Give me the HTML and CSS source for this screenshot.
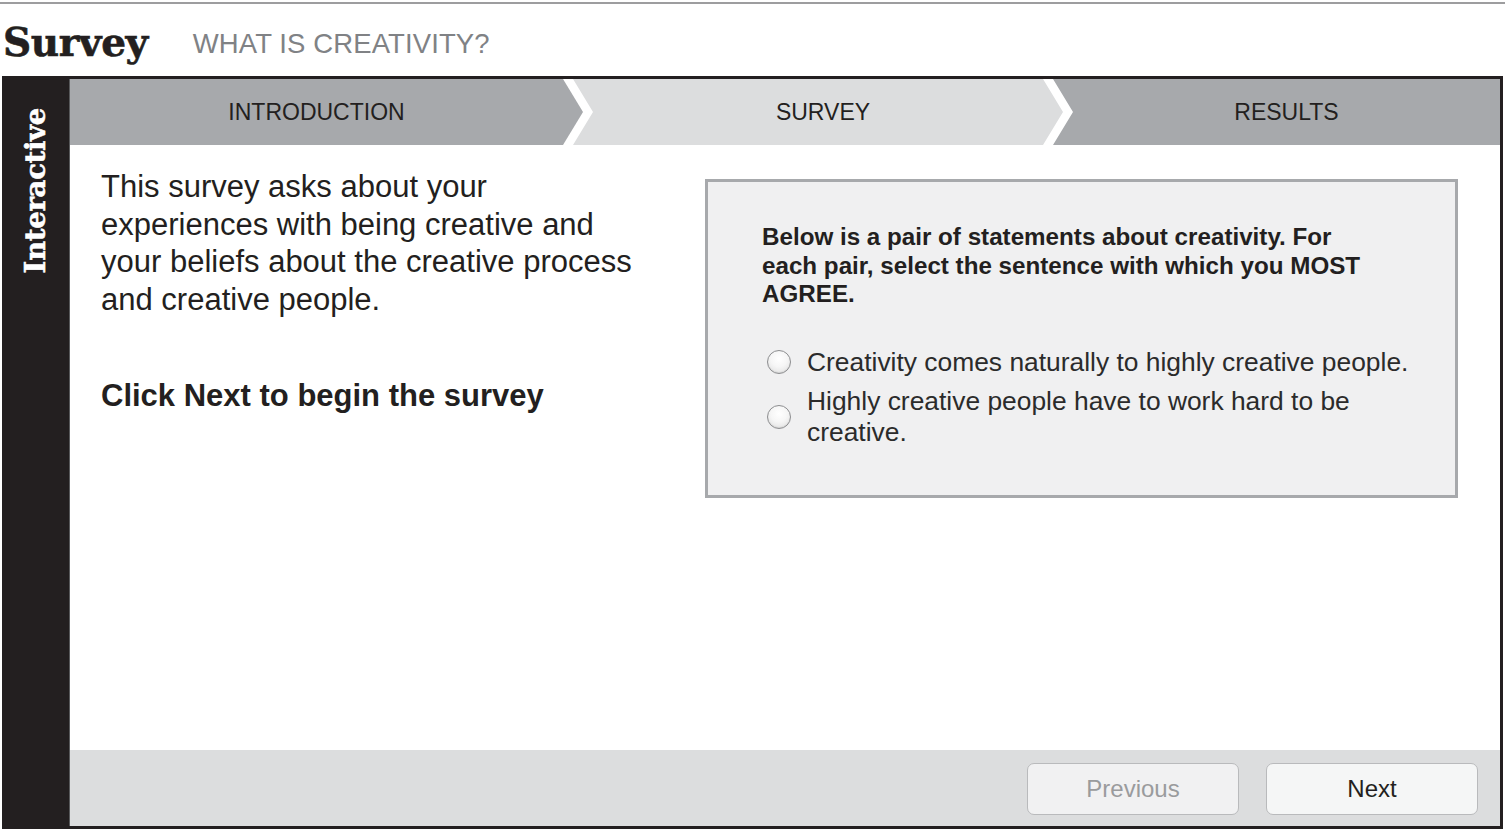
FILE: index.html
```html
<!DOCTYPE html>
<html lang="en">
<head>
<meta charset="utf-8">
<title>Survey – What is creativity?</title>
<link rel="stylesheet" href="styles.css">
</head>
<body>
<div class="topline"></div>
<header class="page-head">
  <h1 class="title">Survey</h1><span class="subtitle">WHAT IS CREATIVITY?</span>
</header>
<section class="frame">
  <aside class="side">
    <span class="side-label">Interactive</span>
  </aside>
  <div class="main">
    <nav class="tabs">
      <div class="tab tab-first">INTRODUCTION</div>
      <div class="tab tab-mid active">SURVEY</div>
      <div class="tab tab-last">RESULTS</div>
    </nav>
    <div class="content">
      <div class="intro">
        <p class="intro-text">This survey asks about your experiences with being creative and your beliefs about the creative process and creative people.</p>
        <p class="intro-cta">Click Next to begin the survey</p>
      </div>
      <div class="question">
        <p class="q-head">Below is a pair of statements about creativity. For each pair, select the sentence with which you MOST AGREE.</p>
        <ul class="options">
          <li class="option"><span class="radio"></span><span class="opt-text">Creativity comes naturally to highly creative people.</span></li>
          <li class="option"><span class="radio"></span><span class="opt-text">Highly creative people have to work hard to be creative.</span></li>
        </ul>
      </div>
    </div>
    <footer class="foot">
      <button class="btn btn-disabled" type="button">Previous</button>
      <button class="btn" type="button">Next</button>
    </footer>
  </div>
</section>
</body>
</html>
```
FILE: styles.css
```css
* { box-sizing: border-box; }
html, body { margin: 0; padding: 0; background: #fff; }
body {
  width: 1505px;
  height: 832px;
  overflow: hidden;
  font-family: "Liberation Sans", Arial, sans-serif;
  color: #231f20;
}
.topline {
  margin-top: 2px;
  height: 2px;
  background: #9d9d9f;
}
.page-head {
  height: 72px;
  padding-left: 3px;
  line-height: 76px;
  white-space: nowrap;
}
.title {
  display: inline;
  margin: 0;
  font-family: "DejaVu Serif", serif;
  font-weight: bold;
  font-size: 39px;
  letter-spacing: -0.4px;
  color: #231f20;
  -webkit-text-stroke: 0.6px #231f20;
}
.subtitle {
  margin-left: 45px;
  font-size: 27.5px;
  color: #808285;
  letter-spacing: 0.1px;
  vertical-align: 3px;
}
.frame {
  margin: 0 2px;
  height: 753px;
  background: #231f20;
  border: 3px solid #231f20;
  border-left: 0;
  display: flex;
}
.side {
  width: 67px;
  flex: none;
  display: flex;
  flex-direction: column;
  align-items: center;
  padding-top: 29px;
  padding-right: 1px;
}
.side-label {
  writing-mode: vertical-rl;
  transform: rotate(180deg);
  font-family: "DejaVu Serif", serif;
  font-weight: bold;
  font-size: 27.5px;
  line-height: 30px;
  color: #fff;
  letter-spacing: -0.3px;
  -webkit-text-stroke: 0.5px #fff;
}
.main {
  flex: 1;
  display: flex;
  flex-direction: column;
  background: #fff;
  border-left: 1px solid #58595b;
}
.tabs {
  height: 66px;
  flex: none;
  display: flex;
  background: #fff;
}
.tab {
  display: flex;
  align-items: center;
  justify-content: center;
  font-size: 23px;
  color: #231f20;
  background: #a7a9ac;
}
.tab.active { background: #dcddde; }
.tab-first {
  width: 513px;
  padding-right: 20px;
  clip-path: polygon(0 0, 493px 0, 513px 50%, 493px 100%, 0 100%);
}
.tab-mid {
  width: 490px;
  margin-left: -10px;
  padding-left: 30px;
  padding-right: 20px;
  clip-path: polygon(0 0, 470px 0, 490px 50%, 470px 100%, 0 100%, 20px 50%);
}
.tab-last {
  flex: 1;
  margin-left: -10px;
  padding-left: 20px;
  clip-path: polygon(0 0, 100% 0, 100% 100%, 0 100%, 20px 50%);
}
.content {
  flex: 1;
  display: flex;
  padding: 23px 42px 0 31px;
}
.intro {
  width: 545px;
  flex: none;
}
.intro-text {
  margin: 0;
  font-size: 31px;
  line-height: 37.7px;
  color: #231f20;
}
.intro-cta {
  margin: 58px 0 0;
  font-size: 31px;
  line-height: 37.7px;
  font-weight: bold;
  color: #231f20;
}
.question {
  margin-left: 59px;
  margin-top: 11px;
  width: 753px;
  height: 319px;
  background: #f0f0f1;
  border: 3px solid #a7a9ac;
  padding: 41px 0 0 54px;
}
.q-head {
  margin: 0;
  max-width: 620px;
  font-size: 24.2px;
  line-height: 28.5px;
  font-weight: bold;
  color: #231f20;
}
.options {
  list-style: none;
  margin: 38px 0 0;
  padding: 0 0 0 5px;
  display: flex;
  flex-direction: column;
  gap: 8px;
}
.option {
  display: flex;
  align-items: center;
}
.radio {
  width: 24px;
  height: 24px;
  flex: none;
  border-radius: 50%;
  border: 1px solid #8d8e90;
  background: radial-gradient(circle at 50% 35%, #ffffff 0%, #f6f6f6 45%, #dcdcdc 100%);
  box-shadow: inset 0 -1px 1px rgba(0,0,0,0.08);
  margin-right: 16px;
}
.opt-text {
  max-width: 625px;
  font-size: 26.4px;
  line-height: 31px;
  color: #2b2b2b;
}
.foot {
  height: 76px;
  flex: none;
  background: #dcddde;
  display: flex;
  justify-content: flex-end;
  align-items: flex-start;
  gap: 27px;
  padding: 13px 22px 0 0;
}
.btn {
  width: 212px;
  height: 52px;
  border: 1.5px solid #b9babc;
  border-radius: 7px;
  background: #f5f6f6;
  font-family: "Liberation Sans", Arial, sans-serif;
  font-size: 24px;
  color: #231f20;
  padding: 0;
}
.btn-disabled {
  background: #f1f1f2;
  color: #9a9b9d;
}
```
